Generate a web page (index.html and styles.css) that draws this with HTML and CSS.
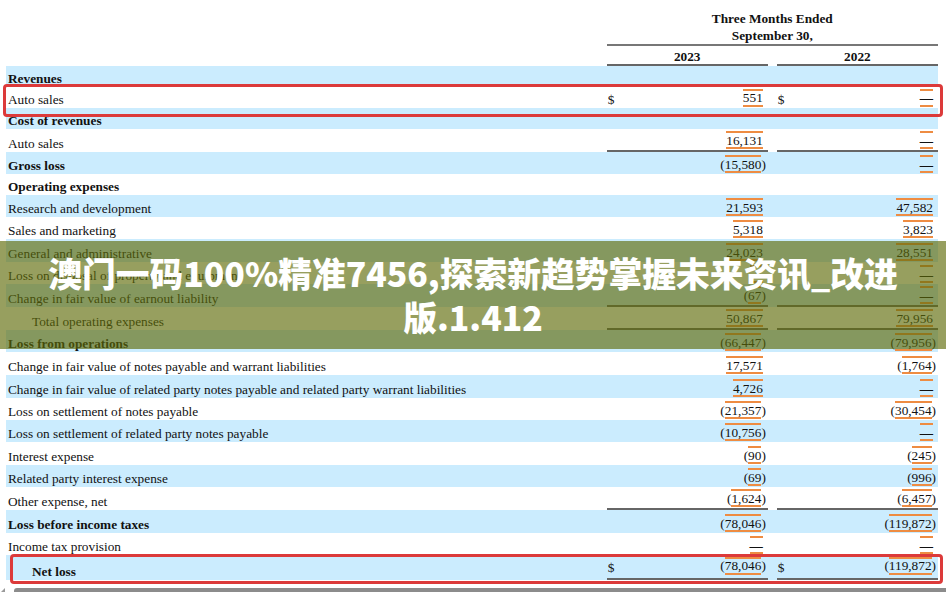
FILE: index.html
```html
<!DOCTYPE html>
<html lang="zh">
<head>
    <meta charset="UTF-8">
    <meta name="viewport" content="width=device-width, initial-scale=1.0">
    <link rel="stylesheet" href="styles.css">
</head>
<body>
    <table class="statement">
        <colgroup>
            <col class="col-label">
            <col class="col-amount">
            <col class="col-gap">
            <col class="col-amount">
        </colgroup>
        <tr class="head-title">
            <td></td>
            <th colspan="3">Three Months Ended<br>September 30,</th>
        </tr>
        <tr class="head-year">
            <td></td>
            <th>2023</th>
            <td></td>
            <th>2022</th>
        </tr>

        <tr class="blue h21"><td class="bold">Revenues</td><td></td><td></td><td></td></tr>
        <tr class="h21"><td>Auto sales</td><td class="amt"><span class="cur">$</span><span class="num">551</span></td><td></td><td class="amt"><span class="cur">$</span><span class="num dash">—</span></td></tr>
        <tr class="blue h21"><td class="bold">Cost of revenues</td><td></td><td></td><td></td></tr>
        <tr class="h23"><td>Auto sales</td><td class="amt rule"><span class="num">16,131</span></td><td></td><td class="amt rule"><span class="num dash">—</span></td></tr>
        <tr class="blue h22"><td class="bold">Gross loss</td><td class="amt"><span class="paren">(</span><span class="num">15,580</span><span class="paren close">)</span></td><td></td><td class="amt"><span class="num dash">—</span></td></tr>
        <tr class="h21"><td class="bold">Operating expenses</td><td></td><td></td><td></td></tr>
        <tr class="blue h22"><td>Research and development</td><td class="amt"><span class="num">21,593</span></td><td></td><td class="amt"><span class="num">47,582</span></td></tr>
        <tr class="h22"><td>Sales and marketing</td><td class="amt"><span class="num">5,318</span></td><td></td><td class="amt"><span class="num">3,823</span></td></tr>
        <tr class="blue h23"><td>General and administrative</td><td class="amt"><span class="num">24,023</span></td><td></td><td class="amt"><span class="num">28,551</span></td></tr>
        <tr class="h22"><td>Loss on disposal of property and equipment</td><td class="amt"><span class="num dash">—</span></td><td></td><td class="amt"><span class="num dash">—</span></td></tr>
        <tr class="blue h23"><td>Change in fair value of earnout liability</td><td class="amt rule"><span class="paren">(</span><span class="num">67</span><span class="paren close">)</span></td><td></td><td class="amt rule"><span class="num dash">—</span></td></tr>
        <tr class="h23"><td class="indent">Total operating expenses</td><td class="amt rule"><span class="num">50,867</span></td><td></td><td class="amt rule"><span class="num">79,956</span></td></tr>
        <tr class="blue h22"><td class="bold">Loss from operations</td><td class="amt"><span class="paren">(</span><span class="num">66,447</span><span class="paren close">)</span></td><td></td><td class="amt"><span class="paren">(</span><span class="num">79,956</span><span class="paren close">)</span></td></tr>
        <tr class="h23"><td>Change in fair value of notes payable and warrant liabilities</td><td class="amt"><span class="num">17,571</span></td><td></td><td class="amt"><span class="paren">(</span><span class="num">1,764</span><span class="paren close">)</span></td></tr>
        <tr class="blue h23"><td>Change in fair value of related party notes payable and related party warrant liabilities</td><td class="amt"><span class="num">4,726</span></td><td></td><td class="amt"><span class="num dash">—</span></td></tr>
        <tr class="h22"><td>Loss on settlement of notes payable</td><td class="amt"><span class="paren">(</span><span class="num">21,357</span><span class="paren close">)</span></td><td></td><td class="amt"><span class="paren">(</span><span class="num">30,454</span><span class="paren close">)</span></td></tr>
        <tr class="blue h22"><td>Loss on settlement of related party notes payable</td><td class="amt"><span class="paren">(</span><span class="num">10,756</span><span class="paren close">)</span></td><td></td><td class="amt"><span class="num dash">—</span></td></tr>
        <tr class="h23"><td>Interest expense</td><td class="amt"><span class="paren">(</span><span class="num">90</span><span class="paren close">)</span></td><td></td><td class="amt"><span class="paren">(</span><span class="num">245</span><span class="paren close">)</span></td></tr>
        <tr class="blue h22"><td>Related party interest expense</td><td class="amt"><span class="paren">(</span><span class="num">69</span><span class="paren close">)</span></td><td></td><td class="amt"><span class="paren">(</span><span class="num">996</span><span class="paren close">)</span></td></tr>
        <tr class="h23"><td>Other expense, net</td><td class="amt rule"><span class="paren">(</span><span class="num">1,624</span><span class="paren close">)</span></td><td></td><td class="amt rule"><span class="paren">(</span><span class="num">6,457</span><span class="paren close">)</span></td></tr>
        <tr class="blue h23"><td class="bold">Loss before income taxes</td><td class="amt"><span class="paren">(</span><span class="num">78,046</span><span class="paren close">)</span></td><td></td><td class="amt"><span class="paren">(</span><span class="num">119,872</span><span class="paren close">)</span></td></tr>
        <tr class="h22"><td>Income tax provision</td><td class="amt"><span class="num dash">—</span></td><td></td><td class="amt"><span class="num dash">—</span></td></tr>
        <tr class="blue h25"><td class="bold indent">Net loss</td><td class="amt double"><span class="cur">$</span><span class="paren">(</span><span class="num">78,046</span><span class="paren close">)</span></td><td></td><td class="amt double"><span class="cur">$</span><span class="paren">(</span><span class="num">119,872</span><span class="paren close">)</span></td></tr>
    </table>

    <!-- red boxes drawn over the statement -->
    <div class="mark mark-sales"></div>
    <div class="mark mark-net"></div>

    <div class="banner">
        <h1>澳门一码100%精准7456,探索新趋势掌握未来资讯_改进版.1.412</h1>
    </div>

    <div class="scroll-arrow"></div>
    <div class="scrollbar"></div>
</body>
</html>
```

FILE: styles.css
```css
html, body {
    height: 100%;
    overflow: hidden;
}

body {
    margin: 0;
    background: #fff;
    color: #111;
    font-family: "Liberation Serif", "Times New Roman", serif;
    font-size: 13.3px;
    position: relative;
}

.statement {
    table-layout: fixed;
    width: 932px;
    margin-left: 6px;
    border-collapse: separate;
    border-spacing: 0;
}

.col-label { width: 600px; }
.col-amount { width: 161px; }
.col-gap { width: 9px; }

.statement td,
.statement th {
    padding: 0;
    box-sizing: border-box;
    vertical-align: bottom;
    line-height: 17.5px;
    white-space: nowrap;
}

.statement td:first-child {
    padding-left: 2px;
}

.statement th {
    font-weight: bold;
    text-align: center;
}

.head-title th {
    height: 46px;
    line-height: 17px;
    border-bottom: 2px solid #777;
}

.head-year th {
    height: 20px;
    line-height: 15px;
    border-bottom: 2px solid #666;
}

.blue td { background: #cbecfe; }

.h21 td { height: 21px; }
.h22 td { height: 22px; }
.h23 td { height: 23px; }
.h25 td { height: 25px; }

.statement td.bold {
    font-weight: bold;
}

.statement td.indent { padding-left: 26px; }

.amt {
    text-align: right;
    padding-right: 5px !important;
}

.rule { border-bottom: 2px solid #666; }

.double {
    border-bottom: 2px solid #666;
    padding-bottom: 2px !important;
}

.cur {
    float: left;
    margin: 2px 0 0 1px;
}

.num {
    display: inline-block;
    line-height: 13px;
    padding: 0.5px 0;
    margin-bottom: 1px;
    border-top: 2px solid #ee8c42;
    border-bottom: 2px solid #ee8c42;
}

.dash { font-weight: bold; }

.paren { margin-left: -1px; }

.paren.close {
    margin-left: 0;
    margin-right: -3px;
}

.mark {
    position: absolute;
    left: 3px;
    width: 940px;
    box-sizing: border-box;
    border: 3px solid #dc3a3a;
    border-radius: 4px;
}

.mark-sales {
    top: 84px;
    height: 33px;
}

.mark-net {
    left: 10px;
    width: 933px;
    top: 554px;
    height: 30px;
}

.banner {
    position: absolute;
    left: 0;
    right: 0;
    top: 241px;
    height: 108px;
    display: flex;
    align-items: center;
    justify-content: center;
    background: rgba(95, 107, 9, 0.65);
}

.banner h1 {
    margin: 0;
    width: 860px;
    color: #fff;
    font-family: "Noto Sans CJK SC", sans-serif;
    font-size: 33.75px;
    font-weight: 900;
    line-height: 44px;
    text-align: center;
}

.scrollbar {
    position: absolute;
    left: 14px;
    right: 0;
    bottom: 0;
    height: 4px;
    background: #8c8c8c;
    border-radius: 3px 0 0 0;
}

.scroll-arrow {
    position: absolute;
    left: 1px;
    bottom: 0;
    border-left: 4px solid transparent;
    border-bottom: 4px solid #9a9a9a;
}
```
